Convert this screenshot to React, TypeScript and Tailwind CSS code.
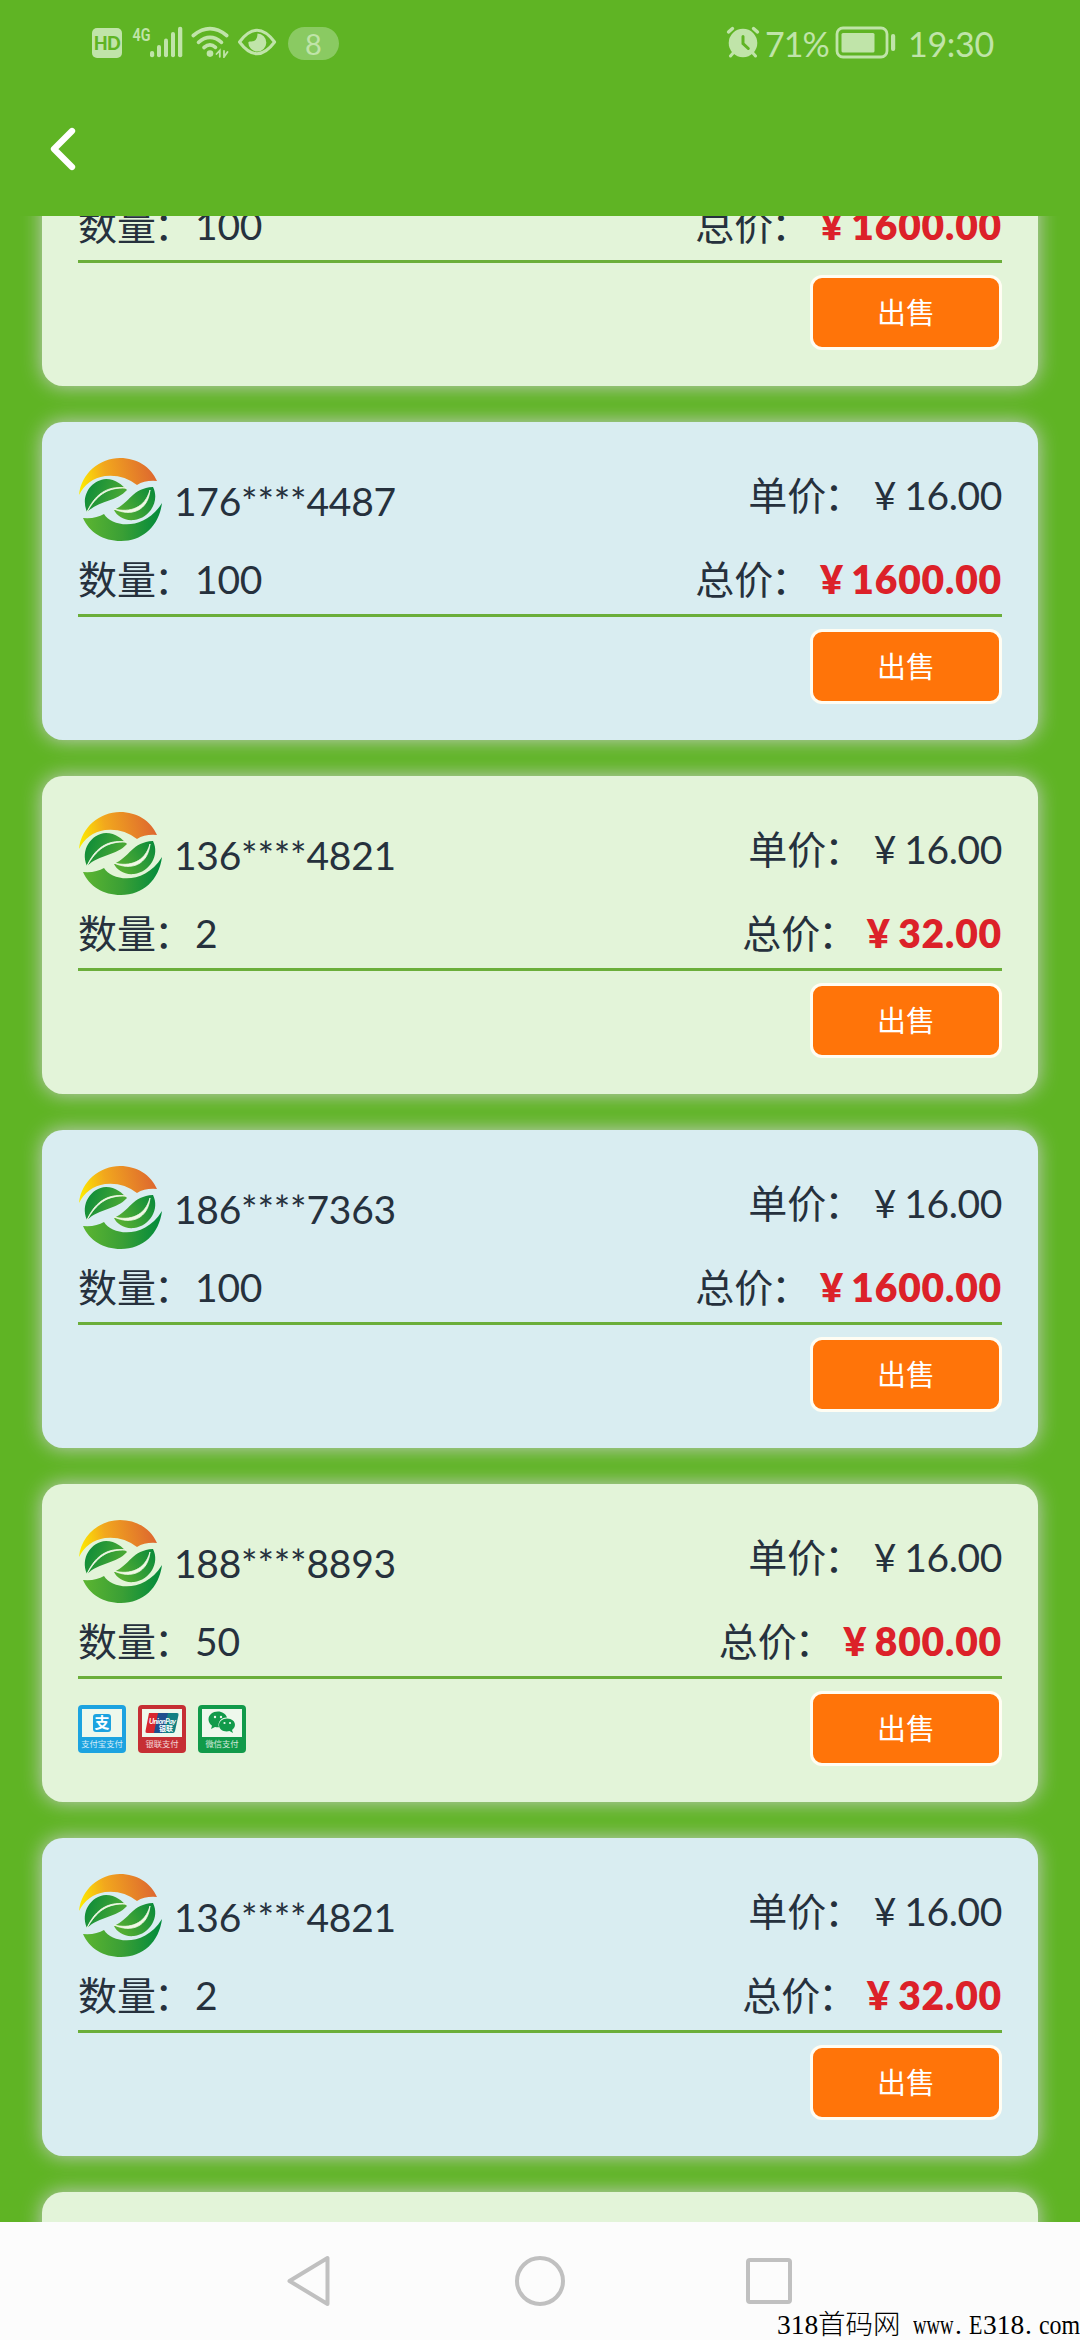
import React from 'react';

type Order = { phone: string; amount: string; total: string; pay?: boolean };

const orders: Order[] = [
  { phone: '136****4821', amount: '100', total: '1600.00' },
  { phone: '176****4487', amount: '100', total: '1600.00' },
  { phone: '136****4821', amount: '2', total: '32.00' },
  { phone: '186****7363', amount: '100', total: '1600.00' },
  { phone: '188****8893', amount: '50', total: '800.00', pay: true },
  { phone: '136****4821', amount: '2', total: '32.00' },
  { phone: '176****4487', amount: '100', total: '1600.00' },
];

const light = '#c0e4a9';

function StatusBar() {
  return (
    <div className="flex h-[88px] items-start pl-[92px] pr-[87px] pt-[24px] text-[#c0e4a9]">
      <div className="mt-1 flex h-[30px] w-[30px] items-center justify-center rounded-[5px] bg-[#c0e4a9] text-[18px] font-black leading-none tracking-[-0.5px] text-[#5fb424]">
        HD
      </div>
      <svg className="ml-[9px] mt-[2px]" width="52" height="32" viewBox="131 26 52 32" fill={light}>
        <text x="132.5" y="40.5" fontSize="18.5" fontFamily="Roboto" fontWeight="600" textLength="18" lengthAdjust="spacingAndGlyphs">4G</text>
        <rect x="150" y="51" width="4.2" height="6.3" rx="2" />
        <rect x="157" y="45" width="4" height="12.3" rx="2" />
        <rect x="164" y="38.5" width="4" height="18.8" rx="2" />
        <rect x="171" y="32" width="4" height="25.3" rx="2" />
        <rect x="178" y="26.7" width="4.3" height="30.6" rx="2" />
      </svg>
      <svg className="ml-[8px] mt-[2px]" width="40" height="32" viewBox="191 26 40 32" fill="none" stroke={light} strokeWidth="3.6" strokeLinecap="round">
        <path d="M193.300 35.500Q210 21.800 226.700 35.500" />
        <path d="M198.500 42.300Q210 32.500 221.500 42.300" />
        <path d="M204 47.500Q210 42.500 215.500 47.300" />
        <circle cx="210" cy="53.600" r="3.300" fill={light} stroke="none" />
        <path d="M216.500 54L219.800 50.500V56.800M224 50.800V57L227.500 52" strokeWidth="1.800" />
      </svg>
      <svg className="ml-[6px] mt-[4px]" width="40" height="28" viewBox="237 28 40 28" fill="none">
        <path d="M239.500 42Q257 18.500 274.600 42Q257 65.500 239.500 42Z" stroke={light} strokeWidth="3" strokeLinejoin="round" />
        <path d="M257.500 33.500A9 9 0 1 1 248.300 42.500Q249 41 250.500 41.500Q257.500 42 257.500 33.500Z" fill={light} />
      </svg>
      <div className="ml-[11px] mt-[3px] flex h-[33px] w-[51px] items-center justify-center rounded-full bg-[#8aca62] pb-[1px] text-[29px] leading-none">
        8
      </div>
      <div className="flex-1" />
      <svg className="mt-[2px]" width="34" height="32" viewBox="725 26 34 32" fill="none" stroke={light} strokeLinecap="round">
        <circle cx="742" cy="43" r="14.300" fill={light} stroke="none" />
        <path d="M727.500 32L731.500 28.500M756.500 32L752.500 28.500" strokeWidth="3.400" />
        <path d="M733 52L729.500 56M751 52L754.500 56" strokeWidth="3" />
        <path d="M742 36.500V43.500L747.300 48.500" stroke="#5fb424" strokeWidth="3" />
      </svg>
      <span className="ml-[5px] w-[70px] text-[34px] leading-[40px] tracking-[-1px]">71%</span>
      <svg className="mt-[2px]" width="62" height="34" viewBox="834 26 62 34">
        <rect x="836" y="28" width="50" height="29" rx="6" fill="none" stroke={light} strokeWidth="2.800" />
        <rect x="840.500" y="33" width="33" height="19.500" rx="1.500" fill={light} />
        <rect x="890" y="34" width="4.200" height="17" rx="2" fill={light} />
      </svg>
      <span className="ml-[11px] w-[85px] text-[34px] leading-[40px] tracking-[-0.3px]">19:30</span>
    </div>
  );
}

function Logo() {
  return (
    <svg className="h-[84px] w-[84px] shrink-0" viewBox="0 0 84 84">
      <defs>
        <linearGradient id="sun" x1="0" y1="0.600" x2="1" y2="0.500">
          <stop offset="0" stopColor="#fdea00" />
          <stop offset="0.350" stopColor="#f2a81d" />
          <stop offset="1" stopColor="#dd6630" />
        </linearGradient>
        <linearGradient id="ground" x1="0" y1="0" x2="1" y2="0">
          <stop offset="0" stopColor="#5cb531" />
          <stop offset="0.500" stopColor="#3a9f35" />
          <stop offset="1" stopColor="#008a3c" />
        </linearGradient>
        <linearGradient id="leaf" x1="0" y1="0" x2="1" y2="0.300">
          <stop offset="0" stopColor="#07893a" />
          <stop offset="1" stopColor="#4ba934" />
        </linearGradient>
        <linearGradient id="leaf2" x1="1" y1="0" x2="0" y2="0.500">
          <stop offset="0" stopColor="#07893a" />
          <stop offset="1" stopColor="#55ae33" />
        </linearGradient>
      </defs>
      <path d="M1 37C3 15 22 0 42 0C59 0 73 9 79 23Q67 22 59 27Q45 16 27 18Q9 21 1 37Z" fill="url(#sun)" />
      <path d="M84 45C81 68 65 83 43 83C25 83 11 74 5 60Q18 61 26 56C34 69 66 74 84 45Z" fill="url(#ground)" />
      <path d="M9 54C2 38 13 22 28 21C38 21 44 27 49 32C38 44 22 42 9 54Z" fill="url(#leaf)" />
      <path d="M36 52C52 45 54 30 75 29C82 43 72 60 56 62C46 63 39 58 36 52Z" fill="url(#leaf2)" />
      <path d="M9 54C16 38 28 27 48 30C29 29 18 38 9 54Z" fill="#f1f9e6" stroke="#f1f9e6" strokeWidth="0.800" />
      <path d="M36 51C52 55 67 50 72 32C70 53 53 59 36 51Z" fill="#f1f9e6" stroke="#f1f9e6" strokeWidth="0.800" />
    </svg>
  );
}

function PayBadge({ tone, label, children }: { tone: string; label: string; children: React.ReactNode }) {
  return (
    <div className={`flex h-12 w-12 flex-col items-center rounded-[4px] pt-1 ${tone}`}>
      <div className="flex h-[28px] w-10 items-center justify-center bg-[#eef8ec]">{children}</div>
      <span className="mt-[1px] whitespace-nowrap text-[8.300px] leading-[12px] text-white/80">{label}</span>
    </div>
  );
}

function PayMethods() {
  return (
    <div className="flex gap-3">
      <PayBadge tone="bg-[#1ca3e0]" label="支付宝支付">
        <span className="flex h-[18px] w-[18px] items-center justify-center rounded-[3px] bg-[#1ca3e0] text-[15px] font-bold leading-none text-white">
          支
        </span>
      </PayBadge>
      <PayBadge tone="bg-[#c62f34]" label="银联支付">
        <svg width="34" height="20" viewBox="0 0 34 20">
          <path d="M4 0H14L10 20H2Q0 20 0.500 18Z" fill="#d7262f" />
          <path d="M13 0H24L19 20H9Z" fill="#1d4f8e" />
          <path d="M23 0H32Q34 0 33.500 2L30 18Q29.500 20 28 20H18Z" fill="#118083" />
          <text x="4" y="10.500" fontSize="7.500" fontWeight="bold" fontStyle="italic" fill="#fff" textLength="27">UnionPay</text>
          <text x="14" y="17.500" fontSize="7" fontWeight="bold" fill="#fff" textLength="14">银联</text>
        </svg>
      </PayBadge>
      <PayBadge tone="bg-[#119a4a]" label="微信支付">
        <svg width="28" height="23" viewBox="0 0 28 23" fill="#119a4a">
          <path d="M10 0.500C4.500 0.500 0.500 4 0.500 8.500C0.500 11 2 13.500 4 14.700L3 18L7 16Q9 16.500 11 16.300C9 11 14 6 19 6.500C18 3 14 0.500 10 0.500Z" />
          <path d="M19 7.500C14.500 7.500 11 10.500 11 14.200C11 18.500 16 21.500 21.500 20L25 22L24 19C29.500 15 27 7.500 19 7.500Z" />
          <circle cx="7" cy="6" r="1.200" fill="#eef8ec" />
          <circle cx="13" cy="6" r="1.200" fill="#eef8ec" />
          <circle cx="16.500" cy="12" r="1.100" fill="#eef8ec" />
          <circle cx="22" cy="12" r="1.100" fill="#eef8ec" />
        </svg>
      </PayBadge>
    </div>
  );
}

function Label({ text }: { text: string }) {
  return (
    <>
      {text}
      <span className="-ml-[2px] mr-[2px]">：</span>
    </>
  );
}

function Price({ value }: { value: string }) {
  return (
    <>
      <span className="inline-block w-[39px] text-center">¥</span>
      {value}
    </>
  );
}

function Card({ order, green }: { order: Order; green: boolean }) {
  return (
    <div
      className={`flex h-[318px] shrink-0 flex-col rounded-[21px] px-9 pt-9 text-[39px] leading-[60px] text-[#26313d] shadow-[0_0_20px_#c6ccc6] ${
        green ? 'bg-[#e3f4d9]' : 'bg-[#d9edf1]'
      }`}
    >
      <div className="flex h-[84px] justify-between">
        <div className="flex">
          <Logo />
          <span className="ml-[12px] mt-[13px] tracking-[-0.250px]">{order.phone}</span>
        </div>
        <span className="mt-[7px]">
          <Label text="单价" />
          <span className="tracking-[-0.400px]">
            <Price value="16.00" />
          </span>
        </span>
      </div>
      <div className="flex h-[75px] justify-between border-b-[3px] border-[#6bae3a] pt-[7px]">
        <span>
          <Label text="数量" />
          <span className="tracking-[-0.250px]">{order.amount}</span>
        </span>
        <span>
          <Label text="总价" />
          <span className="font-extrabold tracking-[0.800px] text-[#dc2129]">
            <Price value={order.total} />
          </span>
        </span>
      </div>
      <div className="mt-3 flex h-[75px] items-center justify-between">
        <div>{order.pay && <PayMethods />}</div>
        <button className="flex h-[75px] w-[192px] items-center justify-center rounded-[12px] border-[3px] border-[#fffdf3] bg-[#ff7409] text-[29px] leading-none text-white">
          出售
        </button>
      </div>
    </div>
  );
}

function NavBar() {
  return (
    <div className="relative h-[118px] bg-[#fcfcfc]">
      <div className="flex h-[118px] items-center pl-[286px]">
        <svg width="46" height="52" viewBox="286 2255 46 52" fill="none" stroke="#c0c0c0" strokeWidth="4" strokeLinejoin="round">
          <path d="M289.500 2281L327.500 2258V2304Z" />
        </svg>
        <div className="ml-[183px] h-[50px] w-[50px] rounded-full border-4 border-[#c0c0c0]" />
        <div className="ml-[181px] h-[46px] w-[46px] rounded-[4px] border-4 border-[#c0c0c0]" />
      </div>
      <div className="absolute bottom-0 right-0 flex h-[30px] w-[303px] whitespace-pre font-['Liberation_Serif','Noto_Sans_CJK_SC',serif] text-[27.500px] leading-[30px] text-black">
        <span className="w-[41px]">318</span>
        <span className="w-[95px] font-light">首码网</span>
        <span className="w-[42px] origin-left scale-x-[0.680]">www</span>
        <span className="w-[14px]">.</span>
        <span className="w-[14px] origin-left scale-x-[0.800]">E</span>
        <span className="w-[42px]">318</span>
        <span className="w-[14px]">.</span>
        <span className="w-[41px] origin-left scale-x-[0.870]">com</span>
      </div>
    </div>
  );
}

export default function App() {
  return (
    <div className="flex h-[2340px] w-[1080px] flex-col overflow-hidden bg-[#5fb424] font-['Lato','Noto_Sans_CJK_SC',sans-serif]">
      <header className="h-[216px] shrink-0">
        <StatusBar />
        <div className="pl-[48px] pt-[37px]">
          <svg width="30" height="48" viewBox="48 125 30 48" fill="none" stroke="#fff" strokeWidth="6.3" strokeLinecap="round" strokeLinejoin="round">
            <path d="M72 131L54 149L72 167" />
          </svg>
        </div>
      </header>
      <main className="flex min-h-0 flex-1 flex-col overflow-hidden px-[42px]">
        <div className="-mt-[148px] flex flex-col gap-9">
          {orders.map((o, i) => (
            <Card key={i} order={o} green={i % 2 === 0} />
          ))}
        </div>
      </main>
      <NavBar />
    </div>
  );
}
